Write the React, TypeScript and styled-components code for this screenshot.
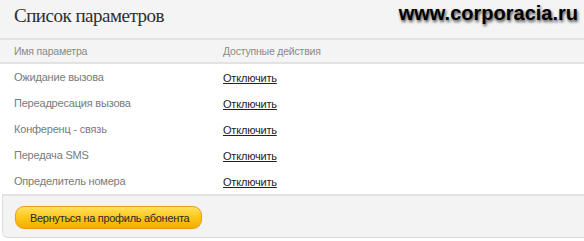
import React from 'react';
import styled, { createGlobalStyle } from 'styled-components';

const params = [
  'Ожидание вызова',
  'Переадресация вызова',
  'Конференц - связь',
  'Передача SMS',
  'Определитель номера',
];

const GlobalStyle = createGlobalStyle`
  body {
    margin: 0;
    background: #ffffff;
    font-family: "Liberation Sans", Arial, sans-serif;
  }
`;

const Page = styled.div`
  width: 584px;
  height: 241px;
  overflow: hidden;
`;

const TitleBar = styled.div`
  height: 38px;
  display: flex;
  align-items: center;
  justify-content: space-between;
  padding: 0 6px 0 14px;
  background: #f4f4f4;
`;

const Title = styled.h1`
  margin: -6px 0 0;
  font-family: "Liberation Serif", "DejaVu Serif", serif;
  font-weight: normal;
  font-size: 19px;
  letter-spacing: -0.5px;
  color: #2e2e2e;
`;

const Watermark = styled.div`
  font-family: "Liberation Sans", Arial, sans-serif;
  font-weight: bold;
  font-size: 20px;
  color: #000;
  text-shadow: 1px 2px 3px rgba(0, 0, 0, 0.7);
  margin-top: -12px;
`;

const Row = styled.div<{ $head?: boolean }>`
  display: grid;
  grid-template-columns: 209px 1fr;
  align-items: center;
  padding-left: 14px;
  height: ${p => (p.$head ? '22px' : '26px')};
  background: ${p => (p.$head ? '#f4f4f4' : '#fff')};
  border-top: ${p => (p.$head ? '2px solid #e2e2e2' : 'none')};
  border-bottom: ${p => (p.$head ? '2px solid #e2e2e2' : 'none')};
`;

const HeadCell = styled.div`
  font-size: 10.5px;
  letter-spacing: -0.2px;
  color: #8a8a8a;
`;

const Name = styled.div`
  font-size: 11px;
  letter-spacing: -0.2px;
  color: #7a7a7a;
`;

const Action = styled.a`
  font-size: 11px;
  letter-spacing: -0.2px;
  color: #222;
  text-decoration: underline;
  cursor: pointer;
`;

const Footer = styled.div`
  margin-left: 2px;
  height: 31px;
  padding: 10px 0 0 12px;
  background: #f3f3f3;
  border-top: 2px solid #e2e2e2;
  border-left: 1px solid #dedede;
  border-bottom: 1px solid #d8d8d8;
  border-bottom-left-radius: 6px;
`;

const Button = styled.button`
  height: 23px;
  padding: 0 12px 0 14px;
  border: 1px solid #e3a018;
  border-radius: 9px;
  background: linear-gradient(#ffe15c, #fcc414 55%, #f4ad00);
  font-family: "Liberation Sans", Arial, sans-serif;
  font-size: 11px;
  letter-spacing: -0.3px;
  color: #2a2a2a;
  cursor: pointer;
`;

export default function App() {
  return (
    <Page>
      <GlobalStyle />
      <TitleBar>
        <Title>Список параметров</Title>
        <Watermark>www.corporacia.ru</Watermark>
      </TitleBar>
      <Row $head>
        <HeadCell>Имя параметра</HeadCell>
        <HeadCell>Доступные действия</HeadCell>
      </Row>
      {params.map((name, i) => (
        <Row key={i}>
          <Name>{name}</Name>
          <div><Action>Отключить</Action></div>
        </Row>
      ))}
      <Footer>
        <Button>Вернуться на профиль абонента</Button>
      </Footer>
    </Page>
  );
}
